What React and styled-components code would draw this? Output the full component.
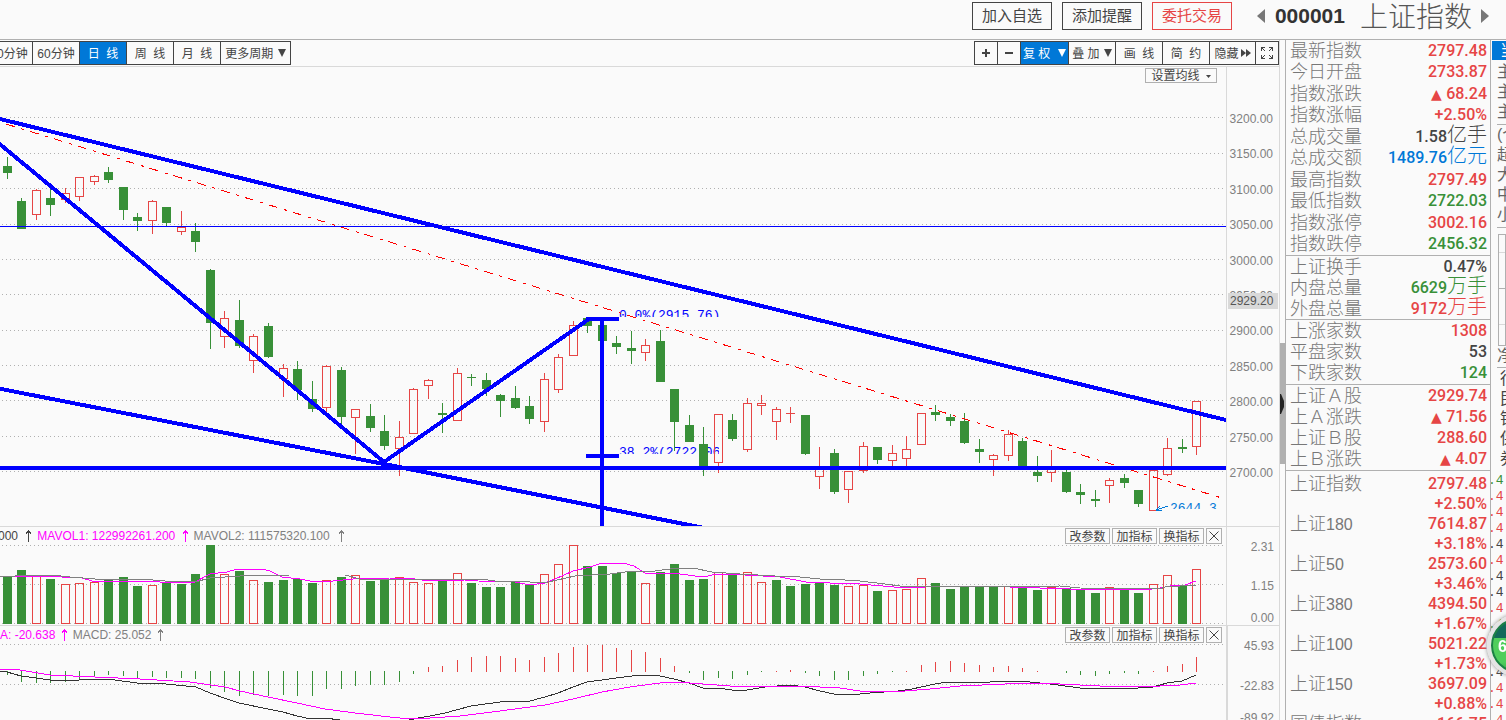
import React from "react";
import styled, { createGlobalStyle } from "styled-components";

const RED = "#e64545";
const GREEN = "#389038";
const BLUE = "#0078d7";
const DARK = "#444444";
const GRAY = "#808080";
const LINE = "#b0b0b0";
const SOFT = "#d9d9d9";

const tones = { red: RED, green: GREEN, blue: BLUE, dark: DARK };

const GlobalStyle = createGlobalStyle`
  * {
    box-sizing: border-box;
  }
  body {
    margin: 0;
    background: #fafafa;
    color: ${DARK};
    font-family: "Liberation Sans", "Noto Sans CJK SC", sans-serif;
    font-size: 12px;
  }
  button {
    font-family: inherit;
    cursor: pointer;
  }
`;

const Page = styled.div`
  display: flex;
  flex-direction: column;
  height: 100vh;
  overflow: hidden;
`;

const Header = styled.header`
  display: flex;
  justify-content: flex-end;
  flex: none;
  height: 40px;
  padding: 2px 17px 0 0;
  border-bottom: 1px solid ${LINE};
`;

const HeaderButtons = styled.div`
  display: flex;
  gap: 10px;
  margin-right: 25px;
`;

const HeaderButton = styled.button`
  width: 80px;
  height: 28px;
  padding: 0;
  border: 1px solid currentColor;
  background: transparent;
  color: ${(props) => (props.$hot ? RED : DARK)};
  font-size: 15px;
  line-height: 20px;
`;

const Symbol = styled.div`
  display: flex;
  align-items: center;
  height: 28px;
`;

const Code = styled.strong`
  margin: 0 15px 0 10px;
  color: #333333;
  font-size: 21px;
`;

const Name = styled.h1`
  margin: 0 9px 0 0;
  padding-top: 3px;
  color: #555555;
  font-size: 28px;
  font-weight: 300;
  line-height: 28px;
`;

const ArrowButton = styled.button`
  display: flex;
  padding: 0;
  border: 0;
  background: transparent;
  color: #777777;
`;

const Body = styled.div`
  display: flex;
  flex: 1;
  min-height: 0;
`;

const ChartColumn = styled.main`
  display: flex;
  flex-direction: column;
  flex: 1;
  min-width: 0;
  overflow: hidden;
  border-right: 1px solid ${SOFT};
`;

const Toolbar = styled.div`
  display: flex;
  justify-content: space-between;
  flex: none;
  height: 27px;
  padding: 1px 0 0;
  border-bottom: 1px solid ${SOFT};
`;

const ButtonGroup = styled.div`
  display: flex;
  margin-left: ${(props) => (props.$bleed ? "-15px" : "0")};
`;

const ToolButton = styled.button`
  display: flex;
  align-items: center;
  justify-content: center;
  gap: 1px;
  width: ${(props) => props.$width || 48}px;
  height: 24px;
  margin-right: -1px;
  padding: 2px 0 0;
  border: 1px solid ${DARK};
  background: ${(props) => (props.$active ? BLUE : "transparent")};
  color: ${(props) => (props.$active ? "#ffffff" : DARK)};
  font-size: 12px;
  line-height: 16px;
  white-space: pre;
  svg {
    margin-bottom: 2px;
  }
  &:last-child {
    margin-right: 0;
  }
`;

const Panel = styled.section`
  display: flex;
  flex: none;
  position: relative;
  border-bottom: 1px solid ${SOFT};
`;

const Plot = styled.div`
  display: flex;
  flex-direction: column;
  align-items: flex-end;
  flex: 1;
  min-width: 0;
  overflow: hidden;
  svg {
    flex: none;
  }
`;

const Axis = styled.div`
  display: flex;
  flex-direction: column;
  flex: none;
  width: 53px;
  padding: 13px 5px 0 0;
  border-left: ${(props) => (props.$thick ? 2 : 1)}px solid ${SOFT};
  color: ${GRAY};
  text-align: right;
  line-height: 14px;
`;

const PriceAxis = styled(Axis)`
  padding-top: 45px;
  padding-right: 6px;
`;

const PriceScale = styled.div`
  display: flex;
  flex-direction: column;
  justify-content: space-between;
  height: 368px;
`;

const AxisLabel = styled.span`
  margin-bottom: ${(props) => props.$gap || 0}px;
`;

const PriceBadge = styled.div`
  position: absolute;
  top: 226px;
  right: 1px;
  width: 50px;
  padding-left: 2px;
  background: ${SOFT};
  color: #555555;
  line-height: 16px;
`;

const AverageButton = styled.button`
  position: absolute;
  top: 1px;
  right: 62px;
  display: flex;
  align-items: center;
  justify-content: center;
  gap: 6px;
  width: 72px;
  height: 15px;
  padding: 2px 0 0;
  border: 1px solid ${LINE};
  background: #fafafa;
  color: ${DARK};
  font-size: 12px;
  line-height: 13px;
`;

const PanelHeader = styled.div`
  display: flex;
  align-items: center;
  justify-content: space-between;
  width: 100%;
  height: 18px;
  padding-right: 4px;
`;

const Legend = styled.div`
  display: flex;
  align-items: center;
  line-height: 16px;
  margin-left: ${(props) => props.$shift}px;
  white-space: pre;
`;

const LegendItem = styled.span`
  display: flex;
  align-items: center;
  gap: ${(props) => props.$gap || 3}px;
  margin-right: 5px;
  color: ${(props) => props.$color};
`;

const PanelButtons = styled.div`
  display: flex;
  gap: 2px;
`;

const SmallButton = styled.button`
  display: flex;
  align-items: center;
  justify-content: center;
  width: ${(props) => props.$width || 45}px;
  height: 16px;
  padding: ${(props) => (props.$width ? 0 : 2)}px 0 0;
  border: 1px solid ${LINE};
  background: transparent;
  color: ${DARK};
  font-size: 12px;
  line-height: 14px;
`;

const ScrollStrip = styled.div`
  flex: none;
  width: 5px;
  padding-top: 303px;
`;

const Thumb = styled.div`
  display: flex;
  align-items: center;
  height: 121px;
  background: ${LINE};
`;

const Quotes = styled.aside`
  flex: none;
  width: 206px;
  overflow: hidden;
  border-left: 1px solid ${LINE};
  border-right: 1px solid ${LINE};
`;

const QuoteTable = styled.table`
  width: 100%;
  height: ${(props) => props.$height}px;
  border-spacing: 0;
  border-bottom: 1px solid ${LINE};
`;

const QuoteLabel = styled.th`
  padding: 0 0 0 4px;
  color: #777777;
  font-size: 18px;
  font-weight: 300;
  line-height: 20px;
  text-align: left;
  white-space: nowrap;
`;

const LabelDigits = styled.span`
  font-size: 16px;
  line-height: 14px;
`;

const QuoteValue = styled.td`
  padding: 0 3px 0 0;
  color: ${(props) => tones[props.$tone]};
  font-family: Roboto, "Noto Sans CJK SC", sans-serif;
  font-size: 16px;
  font-weight: 500;
  line-height: 20px;
  text-align: right;
  white-space: nowrap;
`;

const Unit = styled.span`
  font-size: 20px;
  font-weight: 300;
  line-height: 14px;
`;

const Rise = styled.span`
  font-family: "DejaVu Sans", sans-serif;
  font-size: 14px;
  line-height: 14px;
`;

const IndexTable = styled.table`
  width: 100%;
  margin-top: 3px;
  border-collapse: collapse;
  tr {
    height: 20px;
  }
`;

const SidePane = styled.aside`
  flex: none;
  width: 15px;
  overflow: hidden;
  padding-top: 1px;
  white-space: nowrap;
  color: #666666;
  font-size: 16px;
`;

const SideTab = styled.button`
  display: block;
  width: 60px;
  height: 19px;
  margin-left: 1px;
  padding: 0 0 0 8px;
  border: 0;
  background: ${BLUE};
  color: #ffffff;
  font-size: 16px;
  line-height: 19px;
  text-align: left;
`;

const SideGroup = styled.div`
  height: ${(props) => props.$height}px;
  margin-left: ${(props) => props.$left || 6}px;
  padding-top: ${(props) => props.$top || 0}px;
  border-bottom: ${(props) => (props.$open ? "0" : `1px solid ${LINE}`)};
  color: ${(props) => (props.$open ? DARK : "#666666")};
  line-height: 20px;
`;

const SideBox = styled.div`
  height: 112px;
  margin: 6px 0 0 7px;
  border: 1px solid ${LINE};
  div {
    height: 18px;
    border-bottom: 1px solid ${SOFT};
  }
  div:nth-child(2) {
    height: 36px;
    border-color: ${LINE};
  }
  div:nth-child(3) {
    height: 36px;
  }
`;

const TickList = styled.ul`
  margin: 0;
  padding: 0;
  list-style: none;
  font-family: "Liberation Mono", monospace;
  font-size: 13px;
`;

const Tick = styled.li`
  height: 16px;
  margin-left: -3px;
  line-height: 16px;
  color: ${(props) => tones[props.$tone]};
`;

const Badge = styled.div`
  position: fixed;
  right: -44px;
  top: 614px;
  width: 63px;
  height: 63px;
  padding: 21px 0 0 7px;
  border: 4px solid #e4e4e4;
  border-radius: 50%;
  background: linear-gradient(#12695a 0 20px, #4fce5c 20px 44px, #37a94a);
  box-shadow: 0 0 4px #888888, inset 0 0 0 2px #1c8046;
  overflow: hidden;
  color: #ffffff;
  font-size: 16px;
  font-weight: bold;
  line-height: 16px;
`;

// colour, high, body top, body bottom, low
const candles = [
  ["g", 157, 166, 173, 179], ["g", 198, 201, 229, 229], ["r", 189, 190, 215, 220],
  ["g", 188, 198, 205, 216], ["r", 188, 193, 200, 203], ["r", 177, 177, 197, 201],
  ["r", 175, 176, 182, 185], ["g", 167, 172, 180, 183], ["g", 187, 187, 210, 220],
  ["g", 213, 217, 221, 231], ["r", 200, 201, 221, 234], ["g", 207, 207, 223, 227],
  ["r", 211, 227, 232, 235], ["g", 223, 231, 242, 252], ["g", 269, 270, 323, 349],
  ["r", 311, 318, 337, 348], ["g", 300, 320, 346, 348], ["r", 334, 336, 361, 373],
  ["g", 323, 326, 357, 358], ["r", 364, 368, 379, 397], ["g", 361, 369, 390, 400],
  ["g", 381, 399, 409, 412], ["r", 365, 366, 408, 412], ["g", 367, 370, 417, 425],
  ["r", 409, 409, 418, 454], ["g", 404, 416, 428, 432], ["g", 415, 431, 446, 450],
  ["r", 421, 437, 449, 476], ["r", 388, 389, 434, 434], ["r", 379, 380, 386, 399],
  ["g", 403, 413, 415, 433], ["r", 368, 373, 421, 421], ["g", 374, 377, 378, 386],
  ["g", 373, 380, 389, 396], ["g", 394, 395, 401, 417], ["g", 386, 398, 408, 409],
  ["g", 396, 406, 419, 424], ["r", 373, 379, 422, 432], ["r", 354, 357, 390, 393],
  ["r", 321, 325, 356, 356], ["g", 318, 318, 326, 333], ["g", 325, 325, 341, 341],
  ["g", 336, 343, 347, 354], ["g", 331, 348, 351, 364], ["r", 339, 345, 353, 361],
  ["g", 330, 341, 382, 382], ["g", 389, 389, 422, 451], ["g", 415, 425, 442, 442],
  ["g", 427, 444, 466, 476], ["r", 414, 414, 463, 473], ["g", 414, 420, 439, 441],
  ["r", 398, 403, 450, 452], ["r", 395, 403, 406, 415], ["r", 407, 409, 422, 440],
  ["r", 407, 413, 414, 423], ["g", 415, 415, 454, 455], ["r", 447, 469, 477, 489],
  ["g", 449, 453, 492, 494], ["r", 471, 471, 490, 503], ["r", 442, 446, 471, 473],
  ["g", 447, 447, 460, 464], ["r", 445, 453, 461, 467], ["r", 436, 449, 459, 467],
  ["r", 413, 413, 445, 445], ["g", 405, 412, 415, 421], ["g", 414, 417, 421, 426],
  ["g", 413, 421, 443, 444], ["g", 439, 449, 452, 463], ["r", 454, 455, 460, 476],
  ["r", 430, 434, 456, 461], ["g", 438, 441, 466, 467], ["g", 456, 472, 476, 482],
  ["r", 450, 468, 473, 482], ["g", 470, 472, 492, 493], ["g", 484, 492, 495, 504],
  ["g", 490, 499, 501, 507], ["r", 478, 480, 486, 503], ["g", 474, 478, 483, 488],
  ["g", 490, 490, 504, 507], ["r", 470, 470, 511, 511], ["r", 438, 448, 475, 476],
  ["g", 439, 447, 449, 453], ["r", 401, 401, 447, 455],
];

const volumeTops = [
  577, 570, 576, 579, 584, 583, 582, 579, 577, 586, 585, 582, 584, 574, 545,
  574, 571, 580, 582, 580, 579, 583, 580, 577, 575, 581, 579, 577, 582, 583,
  581, 573, 583, 587, 587, 582, 585, 574, 564, 545, 566, 566, 573, 572, 583,
  572, 564, 580, 579, 572, 574, 572, 582, 580, 586, 584, 582, 585, 586, 585,
  591, 590, 589, 578, 583, 589, 586, 586, 587, 586, 587, 590, 587, 588, 589,
  593, 587, 589, 593, 584, 575, 585, 569,
];

const volumeColors =
  "ggrgrrrgggrgggg" +
  "rgrggggrgrggrrr" +
  "grgggggrrrggggr" +
  "ggggrgrrgggggrr" +
  "grrrgggggrggrgg" +
  "grggrrgr";

const macdEnds = [
  675, 682, 683, 683, 682, 679, 676, 675, 676, 678, 677, 678, 678, 679, 688,
  692, 696, 695, 696, 695, 696, 696, 689, 689, 686, 685, 685, 682, 674, 667,
  666, 660, 657, 656, 656, 658, 660, 657, 653, 647, 645, 645, 648, 650, 652,
  658, 666, 673, 680, 678, 679, 675, 672, 671, 670, 673, 676, 680, 680, 676,
  674, 672, 671, 665, 662, 661, 663, 665, 667, 666, 668, 671, null, 673, 675,
  676, 674, 673, 674, 671, 666, 664, 657,
];

const mavol1 =
  "0,577 30,576 52,576 62,577 82,578 92,581 110,582 128,581 160,582 180,583 195,582 210,574 227,572 237,569 262,569 270,571 282,577 300,579 310,581 333,581 353,579 390,578 407,578 430,581 465,580 478,581 515,582 530,585 545,583 555,579 573,571 590,567 602,563 623,563 634,566 645,573 680,574 703,577 717,574 745,575 780,577 806,582 830,583 860,584 905,588 925,587 945,586 985,586 1010,587 1070,589 1120,589 1145,590 1160,588 1170,586 1185,585 1196,581";

const mavol2 =
  "0,577 30,575 52,575 70,577 95,579 140,579 165,581 195,582 210,578 240,576 290,575 345,575 360,579 420,579 430,580 455,579 480,579 495,581 530,582 548,582 575,576 610,574 632,571 655,571 670,569 693,568 712,572 740,574 775,576 800,577 820,579 845,580 860,581 885,584 900,586 980,586 1010,587 1060,586 1080,588 1160,589 1165,587 1196,585";

const difLine =
  "0,671 7,672 21,676 36,678 50,680 65,681 79,680 108,679 122,681 137,683 166,684 196,687 210,693 224,698 239,703 268,709 283,712 297,716 311,719 325,718 340,720 400,722 418,718 430,716 445,713 471,706 500,702 530,701 545,697 558,693 573,687 587,682 602,680 616,678 640,675 660,676 674,679 689,683 703,688 718,688 732,690 747,690 765,687 790,685 805,687 820,691 834,694 850,695 870,693 898,691 912,689 935,684 947,682 990,682 1005,681 1030,682 1050,684 1080,688 1100,689 1115,688 1138,688 1153,687 1167,683 1182,681 1196,675";

const deaLine =
  "0,669 14,669 50,675 95,677 140,679 190,682 225,687 240,691 268,697 297,703 325,709 355,713 390,717 400,718 430,718 460,716 500,711 545,705 573,699 602,692 630,687 660,683 674,682 690,683 730,686 800,686 840,688 860,691 905,691 930,689 960,686 1005,684 1030,683 1060,684 1100,686 1160,686 1180,685 1196,683";

const prices = [
  "3200.00", "3150.00", "3100.00", "3050.00", "3000.00", "2950.00",
  "2900.00", "2850.00", "2800.00", "2750.00", "2700.00",
];

const priceGrid = [117, 153, 188, 224, 259, 294, 330, 365, 400, 436, 471];

const quoteGroups = [
  {
    height: 216,
    rows: [
      ["最新指数", "2797.48", "red"],
      ["今日开盘", "2733.87", "red"],
      ["指数涨跌", "68.24", "red", "", true],
      ["指数涨幅", "+2.50%", "red"],
      ["总成交量", "1.58", "dark", "亿手"],
      ["总成交额", "1489.76", "blue", "亿元"],
      ["最高指数", "2797.49", "red"],
      ["最低指数", "2722.03", "green"],
      ["指数涨停", "3002.16", "red"],
      ["指数跌停", "2456.32", "green"],
    ],
  },
  {
    height: 64,
    rows: [
      ["上证换手", "0.47%", "dark"],
      ["内盘总量", "6629", "green", "万手"],
      ["外盘总量", "9172", "red", "万手"],
    ],
  },
  {
    height: 65,
    rows: [
      ["上涨家数", "1308", "red"],
      ["平盘家数", "53", "dark"],
      ["下跌家数", "124", "green"],
    ],
  },
  {
    height: 86,
    rows: [
      ["上证Ａ股", "2929.74", "red"],
      ["上Ａ涨跌", "71.56", "red", "", true],
      ["上证Ｂ股", "288.60", "red"],
      ["上Ｂ涨跌", "4.07", "red", "", true],
    ],
  },
];

const indexes = [
  ["上证指数", "", "2797.48", "+2.50%"],
  ["上证", "180", "7614.87", "+3.18%"],
  ["上证", "50", "2573.60", "+3.46%"],
  ["上证", "380", "4394.50", "+1.67%"],
  ["上证", "100", "5021.22", "+1.73%"],
  ["上证", "150", "3697.09", "+0.88%"],
  ["国债指数", "", "166.75", "+0.01%"],
];

const ticks = [
  "green", "red", "red", "red", "dark", "red", "dark", "dark",
  "red", "green", "red", "red", "dark", "red", "red", "red",
];

const centerOf = (i) => Math.floor(7.4 + 14.5055 * i);

const UpArrow = () => (
  <svg width="7" height="12" viewBox="0 0 7 12" shapeRendering="crispEdges">
    <path d="M3.5 0V12M3.5 0.5L0.5 4.5M3.5 0.5L6.5 4.5" stroke="currentColor" fill="none" />
  </svg>
);

const Down = ({ size = 8 }) => (
  <svg width={size} height={size} viewBox="0 0 8 8">
    <path d="M0 0H8L4 8Z" fill="currentColor" />
  </svg>
);

const Cross = () => (
  <svg width="10" height="10" viewBox="0 0 10 10">
    <path d="M0.5 0.5L9.5 9.5M9.5 0.5L0.5 9.5" stroke="currentColor" />
  </svg>
);

const GridLine = ({ y }) => (
  <line x1="2" x2="1226" y1={y + 0.5} y2={y + 0.5} stroke={LINE} strokeDasharray="1 3" />
);

const Bar = ({ i, color, top, bottom }) => {
  const x = centerOf(i) - 4;
  const height = bottom - top;
  if (color === "g" || height < 2) {
    return <rect x={x} y={top} width="9" height={height} fill={color === "g" ? GREEN : RED} />;
  }
  return (
    <rect x={x + 0.5} y={top + 0.5} width="8" height={height - 1} fill="none" stroke={RED} />
  );
};

const Candle = ({ i, data }) => {
  const [color, high, top, bottom, low] = data;
  const fill = color === "g" ? GREEN : RED;
  return (
    <g>
      <rect x={centerOf(i)} y={high} width="1" height={top - high} fill={fill} />
      <rect x={centerOf(i)} y={bottom} width="1" height={low - bottom} fill={fill} />
      <Bar i={i} color={color} top={top} bottom={bottom} />
    </g>
  );
};

const PriceChart = () => (
  <svg width="1226" height="459" viewBox="0 67 1226 459" shapeRendering="crispEdges">
    <defs>
      <clipPath id="level-top">
        <rect x="619" y="300" width="100" height="17" />
      </clipPath>
      <clipPath id="level-mid">
        <rect x="619" y="440" width="100" height="14" />
      </clipPath>
      <clipPath id="low-mark">
        <rect x="1170" y="495" width="50" height="14" />
      </clipPath>
    </defs>
    {priceGrid.map((y) => (
      <GridLine key={y} y={y} />
    ))}
    <g fontFamily="Liberation Mono, monospace" fontSize="13">
      <text x="619" y="319" fill="#0000ff" clipPath="url(#level-top)">
        0.0%(2915.76)
      </text>
      <text x="619" y="456" fill="#0000ff" clipPath="url(#level-mid)">
        38.2%(2722.06)
      </text>
      <text x="1170" y="512" fill={BLUE} clipPath="url(#low-mark)">
        2644.3
      </text>
    </g>
    {candles.map((data, i) => (
      <Candle key={i} i={i} data={data} />
    ))}
    <line x1="6" y1="124" x2="1225" y2="499" stroke="#ff0000" strokeDasharray="9 7 3 6" />
    <path d="M1168 506L1156 510M1160 506L1156 510L1162 511" stroke={BLUE} fill="none" />
    <rect x="0" y="226" width="1226" height="1" fill="#0000ff" />
    <g stroke="#0000ff" strokeWidth="4" fill="none">
      <path d="M-4 118L1230 421" />
      <path d="M-4 141L384 462L589 319H619" />
      <path d="M586 319H619M586 456H619M602 319V526" />
      <path d="M0 468H1226" />
      <path d="M-4 388L384 464L704 528" />
    </g>
  </svg>
);

const VolumeChart = () => (
  <svg width="1226" height="80" viewBox="0 545 1226 80" shapeRendering="crispEdges">
    <GridLine y={545} />
    <GridLine y={584} />
    <GridLine y={623} />
    {volumeTops.map((top, i) => (
      <Bar key={i} i={i} color={volumeColors[i]} top={top} bottom={624} />
    ))}
    <polyline points={mavol1} fill="none" stroke="#ff00ff" />
    <polyline points={mavol2} fill="none" stroke={GRAY} />
  </svg>
);

const MacdChart = () => (
  <svg width="1226" height="76" viewBox="0 644 1226 76" shapeRendering="crispEdges">
    <GridLine y={644} />
    <GridLine y={684} />
    {macdEnds.map((end, i) => {
      if (end === null) return null;
      const down = end > 671;
      return (
        <rect
          key={i}
          x={centerOf(i)}
          y={down ? 671 : end}
          width="1"
          height={down ? end - 671 : 672 - end}
          fill={down ? GREEN : RED}
        />
      );
    })}
    <polyline points={difLine} fill="none" stroke="#333333" />
    <polyline points={deaLine} fill="none" stroke="#ff00ff" />
  </svg>
);

const IndicatorButtons = () => (
  <PanelButtons>
    <SmallButton>改参数</SmallButton>
    <SmallButton>加指标</SmallButton>
    <SmallButton>换指标</SmallButton>
    <SmallButton $width={16} aria-label="关闭">
      <Cross />
    </SmallButton>
  </PanelButtons>
);

const TopHeader = () => (
  <Header>
    <HeaderButtons>
      <HeaderButton>加入自选</HeaderButton>
      <HeaderButton>添加提醒</HeaderButton>
      <HeaderButton $hot>委托交易</HeaderButton>
    </HeaderButtons>
    <Symbol>
      <ArrowButton aria-label="上一个">
        <svg width="8" height="14" viewBox="0 0 8 14">
          <path d="M8 0V14L0 7Z" fill="currentColor" />
        </svg>
      </ArrowButton>
      <Code>000001</Code>
      <Name>上证指数</Name>
      <ArrowButton aria-label="下一个">
        <svg width="8" height="14" viewBox="0 0 8 14">
          <path d="M0 0V14L8 7Z" fill="currentColor" />
        </svg>
      </ArrowButton>
    </Symbol>
  </Header>
);

const ChartToolbar = () => (
  <Toolbar>
    <ButtonGroup $bleed>
      <ToolButton>30分钟</ToolButton>
      <ToolButton>60分钟</ToolButton>
      <ToolButton $active>{"日  线"}</ToolButton>
      <ToolButton>{"周  线"}</ToolButton>
      <ToolButton>{"月  线"}</ToolButton>
      <ToolButton $width={71} aria-haspopup="menu">
        更多周期 <Down />
      </ToolButton>
    </ButtonGroup>
    <ButtonGroup>
      <ToolButton $width={24} aria-label="放大">
        <svg width="8" height="8" viewBox="0 0 8 8">
          <path d="M4 0V8M0 4H8" stroke="currentColor" strokeWidth="2" />
        </svg>
      </ToolButton>
      <ToolButton $width={24} aria-label="缩小">
        <svg width="8" height="8" viewBox="0 0 8 8">
          <path d="M0 4H8" stroke="currentColor" strokeWidth="2" />
        </svg>
      </ToolButton>
      <ToolButton $width={49} $active aria-haspopup="menu">
        {"复 权 "} <Down />
      </ToolButton>
      <ToolButton aria-haspopup="menu">
        {"叠 加"} <Down />
      </ToolButton>
      <ToolButton>{"画  线"}</ToolButton>
      <ToolButton>{"简  约"}</ToolButton>
      <ToolButton $width={47}>
        隐藏
        <svg width="11" height="8" viewBox="0 0 11 8">
          <path d="M1 0L6 4L1 8ZM6 0L11 4L6 8Z" fill="currentColor" />
        </svg>
      </ToolButton>
      <ToolButton $width={24} aria-label="全屏">
        <svg width="12" height="12" viewBox="0 0 12 12" shapeRendering="crispEdges">
          <path
            d="M0.5 4V0.5H4M8 0.5H11.5V4M11.5 8V11.5H8M4 11.5H0.5V8M1 1L4 4M11 1L8 4M11 11L8 8M1 11L4 8"
            stroke="currentColor"
            fill="none"
          />
        </svg>
      </ToolButton>
    </ButtonGroup>
  </Toolbar>
);

const Charts = () => (
  <ChartColumn>
    <ChartToolbar />
    <Panel>
      <Plot>
        <PriceChart />
      </Plot>
      <PriceAxis>
        <PriceScale>
          {prices.map((price) => (
            <AxisLabel key={price}>{price}</AxisLabel>
          ))}
        </PriceScale>
      </PriceAxis>
      <PriceBadge>2929.20</PriceBadge>
      <AverageButton>
        设置均线
        <svg width="5" height="3" viewBox="0 0 5 3">
          <path d="M0 0H5L2.5 3Z" fill="currentColor" />
        </svg>
      </AverageButton>
    </Panel>
    <Panel>
      <Plot>
        <PanelHeader>
          <Legend $shift={-2}>
            <LegendItem $color={DARK} $gap={4}>
              000 <UpArrow />
            </LegendItem>
            <LegendItem $color="#ff00ff">
              MAVOL1: 122992261.200 <UpArrow />
            </LegendItem>
            <LegendItem $color={GRAY} $gap={5}>
              MAVOL2: 111575320.100 <UpArrow />
            </LegendItem>
          </Legend>
          <IndicatorButtons />
        </PanelHeader>
        <VolumeChart />
      </Plot>
      <Axis>
        <AxisLabel $gap={25}>2.31</AxisLabel>
        <AxisLabel $gap={18}>1.15</AxisLabel>
        <AxisLabel>0.00</AxisLabel>
      </Axis>
    </Panel>
    <Panel>
      <Plot>
        <PanelHeader>
          <Legend $shift={0}>
            <LegendItem $color="#ff00ff" $gap={2}>
              A: -20.638 <UpArrow />
            </LegendItem>
            <LegendItem $color={GRAY} $gap={2}>
              MACD: 25.052 <UpArrow />
            </LegendItem>
          </Legend>
          <IndicatorButtons />
        </PanelHeader>
        <MacdChart />
      </Plot>
      <Axis $thick>
        <AxisLabel $gap={26}>45.93</AxisLabel>
        <AxisLabel $gap={18}>-22.83</AxisLabel>
        <AxisLabel>-89.92</AxisLabel>
      </Axis>
    </Panel>
  </ChartColumn>
);

const QuotePanel = () => (
  <Quotes>
    {quoteGroups.map((group) => (
      <QuoteTable key={group.rows[0][0]} $height={group.height}>
        <tbody>
          {group.rows.map(([label, value, tone, unit, up]) => (
            <tr key={label}>
              <QuoteLabel scope="row">{label}</QuoteLabel>
              <QuoteValue $tone={tone}>
                {up && <Rise>▲ </Rise>}
                {value}
                {unit && <Unit>{unit}</Unit>}
              </QuoteValue>
            </tr>
          ))}
        </tbody>
      </QuoteTable>
    ))}
    <IndexTable>
      <tbody>
        {indexes.map(([label, digits, value, change]) => (
          <React.Fragment key={label + digits}>
            <tr>
              <QuoteLabel scope="row">
                {label}
                {digits && <LabelDigits>{digits}</LabelDigits>}
              </QuoteLabel>
              <QuoteValue $tone="red">{value}</QuoteValue>
            </tr>
            <tr>
              <QuoteValue colSpan="2" $tone="red">
                {change}
              </QuoteValue>
            </tr>
          </React.Fragment>
        ))}
      </tbody>
    </IndexTable>
  </Quotes>
);

const Side = () => (
  <SidePane>
    <SideTab>当</SideTab>
    <SideGroup $height={65} $top={2}>
      <div>主</div>
      <div>主</div>
      <div>主</div>
    </SideGroup>
    <SideGroup $height={103}>
      <div>(个</div>
      <div>超</div>
      <div>大</div>
      <div>中</div>
      <div>小</div>
    </SideGroup>
    <SideBox>
      <div />
      <div />
      <div />
    </SideBox>
    <SideGroup $height={22}>
      <div>净</div>
    </SideGroup>
    <SideGroup $height={105} $left={9} $top={1} $open>
      <div>行</div>
      <div>民</div>
      <div>银</div>
      <div>保</div>
      <div>券</div>
    </SideGroup>
    <TickList>
      {ticks.map((tone, i) => (
        <Tick key={i} $tone={tone}>
          .4
        </Tick>
      ))}
    </TickList>
    <Badge>6</Badge>
  </SidePane>
);

const App = () => (
  <>
    <GlobalStyle />
    <Page>
      <TopHeader />
      <Body>
        <Charts />
        <ScrollStrip>
          <Thumb>
            <svg width="5" height="20" viewBox="0 0 5 20">
              <path d="M0 0H1L4 7V13L1 20H0Z" fill="#222222" />
            </svg>
          </Thumb>
        </ScrollStrip>
        <QuotePanel />
        <Side />
      </Body>
    </Page>
  </>
);

export default App;
